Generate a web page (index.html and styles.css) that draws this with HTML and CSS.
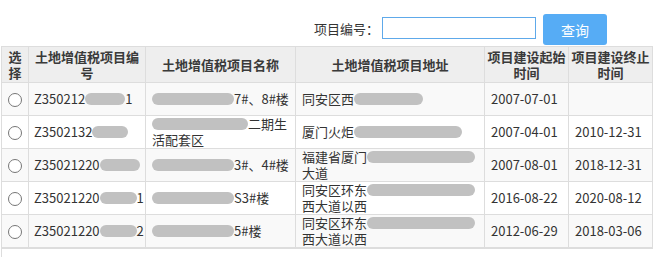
FILE: index.html
```html
<!DOCTYPE html>
<html lang="zh-CN">
<head>
    <meta charset="UTF-8">
    <title>土地增值税项目查询</title>
    <link rel="stylesheet" href="styles.css">
</head>
<body>
    <div class="search-bar">
        <label for="projectNo">项目编号：</label>
        <input type="text" id="projectNo" autofocus>
        <button type="button">查询</button>
    </div>

    <table class="grid">
        <colgroup>
            <col class="c-sel">
            <col class="c-no">
            <col class="c-name">
            <col class="c-addr">
            <col class="c-date">
            <col class="c-date">
        </colgroup>
        <thead>
            <tr>
                <th>选择</th>
                <th>土地增值税项目编号</th>
                <th>土地增值税项目名称</th>
                <th>土地增值税项目地址</th>
                <th>项目建设起始时间</th>
                <th>项目建设终止时间</th>
            </tr>
        </thead>
        <tbody>
            <tr>
                <td class="sel"><input type="radio" name="pick"></td>
                <td class="no">Z350212<span class="mask m-no"></span>1</td>
                <td><span class="mask m-name"></span>7#、8#楼</td>
                <td>同安区西<span class="mask m-addr1"></span></td>
                <td>2007-07-01</td>
                <td></td>
            </tr>
            <tr>
                <td class="sel"><input type="radio" name="pick"></td>
                <td class="no">Z3502132<span class="mask m-no2"></span></td>
                <td><span class="mask m-name2"></span>二期生活配套区</td>
                <td>厦门火炬<span class="mask m-addr2"></span></td>
                <td>2007-04-01</td>
                <td>2010-12-31</td>
            </tr>
            <tr>
                <td class="sel"><input type="radio" name="pick"></td>
                <td class="no">Z35021220<span class="mask m-no3"></span></td>
                <td><span class="mask m-name"></span>3#、4#楼</td>
                <td>福建省厦门<span class="mask m-addr3"></span>大道</td>
                <td>2007-08-01</td>
                <td>2018-12-31</td>
            </tr>
            <tr>
                <td class="sel"><input type="radio" name="pick"></td>
                <td class="no">Z35021220<span class="mask m-no4"></span>1</td>
                <td><span class="mask m-name"></span>S3#楼</td>
                <td>同安区环东<span class="mask m-addr3"></span>西大道以西</td>
                <td>2016-08-22</td>
                <td>2020-08-12</td>
            </tr>
            <tr>
                <td class="sel"><input type="radio" name="pick"></td>
                <td class="no">Z35021220<span class="mask m-no4"></span>2</td>
                <td><span class="mask m-name"></span>5#楼</td>
                <td>同安区环东<span class="mask m-addr3"></span>西大道以西</td>
                <td>2012-06-29</td>
                <td>2018-03-06</td>
            </tr>
        </tbody>
    </table>
    <div class="pager"></div>
</body>
</html>
```

FILE: styles.css
```css
body, html {
    margin: 0;
    padding: 0;
    background: #fff;
    color: #333;
    font-family: "Noto Sans CJK SC", "Microsoft YaHei", sans-serif;
    font-size: 13px;
    overflow: hidden;
}
.search-bar {
    display: flex;
    align-items: center;
    justify-content: flex-end;
    padding: 14px 48px 1px 0;
    height: 31px;
}
.search-bar label {
    color: #333;
    margin-right: 3px;
    margin-top: -2px;
}
.search-bar input {
    box-sizing: border-box;
    width: 154px;
    height: 22px;
    padding: 0 2px;
    border: 1px solid #5ea9ea;
    outline: none;
    margin: -4px 7px 0 0;
    font-size: 13px;
}
.search-bar button {
    width: 64px;
    height: 31px;
    border: none;
    border-radius: 3px;
    background: #56acf5;
    color: #fff;
    font-family: inherit;
    font-size: 14px;
    cursor: pointer;
}
.grid {
    border-collapse: collapse;
    table-layout: fixed;
    width: 651px;
    margin-left: 1px;
}
.c-sel { width: 27px; }
.c-no { width: 117px; }
.c-name { width: 150px; }
.c-addr { width: 189px; }
.c-date { width: 84px; }
.grid th, .grid td {
    border: 1px solid #ddd;
    line-height: 16px;
    vertical-align: middle;
    overflow: hidden;
}
.grid th {
    background: #eee;
    font-weight: bold;
    text-align: center;
    height: 35px;
    padding: 0 2px;
    color: #3a3a3a;
}
.grid td {
    height: 32px;
    padding: 0 4px 0 6px;
    text-align: left;
}
.grid td.no {
    white-space: nowrap;
    padding: 0 0 0 5px;
}
.grid tbody tr:nth-child(odd) td {
    background: #f9f9f9;
}
.grid tbody tr:last-child td {
    border-bottom: 2px solid #ddd;
}
.grid td.sel {
    padding: 0;
    text-align: center;
}
.sel input {
    margin: 0;
    width: 14px;
    height: 14px;
    vertical-align: middle;
}
.mask {
    display: inline-block;
    height: 12px;
    border-radius: 6px;
    background: #c1c1c1;
    vertical-align: -1px;
}
.m-no { width: 40px; }
.m-no2 { width: 36px; }
.m-no3 { width: 40px; }
.m-no4 { width: 37px; }
.m-name { width: 82px; }
.m-name2 { width: 96px; }
.m-addr1 { width: 69px; }
.m-addr2 { width: 108px; }
.m-addr3 { width: 108px; }
.pager {
    margin-left: 1px;
    height: 20px;
    border-left: 1px solid #ddd;
}
```
